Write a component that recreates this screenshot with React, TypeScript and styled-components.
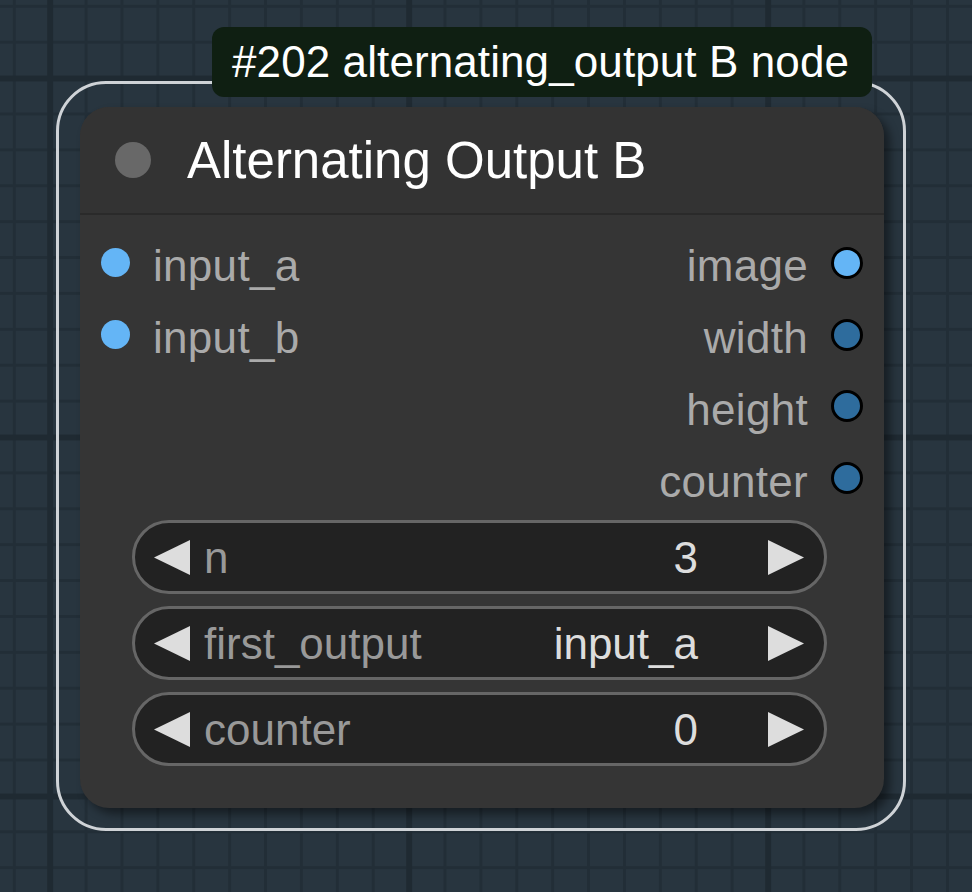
import React from "react";
import styled, { createGlobalStyle } from "styled-components";

const GlobalStyle = createGlobalStyle`
  html, body {
    margin: 0;
    padding: 0;
    width: 100%;
    height: 100%;
    overflow: hidden;
    background: #28353f;
  }
  body {
    font-family: "Liberation Sans", Arial, sans-serif;
  }
  #root {
    width: 100%;
    height: 100%;
  }
`;

const Canvas = styled.div`
  position: relative;
  width: 972px;
  height: 892px;
  overflow: hidden;
  background-color: #28353f;
  background-image:
    linear-gradient(to right, #1f2a32 0 6px, transparent 6px),
    linear-gradient(to bottom, #1f2a32 0 6px, transparent 6px),
    linear-gradient(to right, #222e37 0 3px, transparent 3px),
    linear-gradient(to bottom, #222e37 0 3px, transparent 3px);
  background-size: 359px 100%, 100% 359px, 35.9px 100%, 100% 35.9px;
  background-position: 47.2px 0, 0 75.5px, 12.8px 0, 0 4.8px;
`;

const Selection = styled.div`
  position: absolute;
  left: 56px;
  top: 81px;
  width: 850px;
  height: 750px;
  box-sizing: border-box;
  border: 3px solid #cfd3d7;
  border-radius: 50px;
  padding: 23px 20px 20px 21px;
`;

const Badge = styled.div`
  position: absolute;
  left: 212px;
  top: 27px;
  width: 660px;
  height: 70px;
  box-sizing: border-box;
  padding-left: 20px;
  display: flex;
  align-items: center;
  background: #0f1f12;
  border-radius: 12px;
  color: #ffffff;
  font-size: 44px;
  letter-spacing: 0.1px;
  white-space: nowrap;
`;

const Node = styled.div`
  width: 804px;
  height: 701px;
  box-sizing: border-box;
  background: #353535;
  border-radius: 29px;
  box-shadow: 6px 6px 10px rgba(0, 0, 0, 0.45);
  display: flex;
  flex-direction: column;
`;

const TitleBar = styled.div`
  height: 108px;
  box-sizing: border-box;
  flex: none;
  display: flex;
  align-items: center;
  gap: 36px;
  padding-left: 35px;
  background: #333333;
  border-radius: 29px 29px 0 0;
  border-bottom: 2px solid #2a2a2a;
`;

const TitleDot = styled.div`
  width: 36px;
  height: 36px;
  border-radius: 50%;
  background: #686868;
  flex: none;
`;

const TitleText = styled.div`
  color: #ffffff;
  font-size: 51px;
  white-space: nowrap;
`;

const Body = styled.div`
  display: flex;
  flex-direction: column;
  padding-top: 12px;
`;

const SlotArea = styled.div`
  display: flex;
  justify-content: space-between;
`;

const SlotColumn = styled.div<{ $side: "in" | "out" }>`
  display: flex;
  flex-direction: column;
  align-items: ${(p) => (p.$side === "in" ? "flex-start" : "flex-end")};
  padding: ${(p) => (p.$side === "in" ? "0 0 0 21px" : "0 21px 0 0")};
`;

const SlotRow = styled.div`
  height: 71.8px;
  display: flex;
  align-items: center;
  gap: 23px;
`;

const SlotLabel = styled.span`
  color: #aaaaaa;
  font-size: 44px;
  letter-spacing: 0.3px;
  white-space: nowrap;
  padding-top: 7px;
`;

const InputDot = styled.div`
  width: 29px;
  height: 29px;
  border-radius: 50%;
  background: #64b5f6;
  flex: none;
`;

const OutputDot = styled.div<{ $color: string }>`
  width: 32px;
  height: 32px;
  box-sizing: border-box;
  border-radius: 50%;
  border: 3px solid #000000;
  background: ${(p) => p.$color};
  flex: none;
`;

const WidgetList = styled.div`
  display: flex;
  flex-direction: column;
  gap: 12px;
  margin-top: 6px;
  margin-left: 52px;
  width: 695px;
`;

const Widget = styled.div`
  height: 74px;
  box-sizing: border-box;
  border: 3px solid #666666;
  border-radius: 37px;
  background: #222222;
  display: flex;
  align-items: center;
  padding: 0 20px 0 19px;
`;

const Arrow = styled.svg`
  width: 36px;
  height: 35px;
  flex: none;
  display: block;
`;

const WidgetLabel = styled.span`
  margin-left: 14px;
  color: #999999;
  font-size: 44px;
  white-space: nowrap;
  flex: 1;
  padding-top: 2px;
`;

const WidgetValue = styled.span`
  margin-right: 70px;
  color: #dddddd;
  font-size: 44px;
  white-space: nowrap;
  padding-top: 2px;
`;

const LeftArrow = () => (
  <Arrow viewBox="0 0 36 35">
    <polygon points="36,0 36,35 0,17.5" fill="#dddddd" />
  </Arrow>
);

const RightArrow = () => (
  <Arrow viewBox="0 0 36 35">
    <polygon points="0,0 0,35 36,17.5" fill="#dddddd" />
  </Arrow>
);

const inputs = ["input_a", "input_b"];
const outputs = [
  { name: "image", color: "#64b5f6" },
  { name: "width", color: "#2e6c9d" },
  { name: "height", color: "#2e6c9d" },
  { name: "counter", color: "#2e6c9d" },
];
const widgets = [
  { label: "n", value: "3" },
  { label: "first_output", value: "input_a" },
  { label: "counter", value: "0" },
];

export default function App() {
  return (
    <>
      <GlobalStyle />
      <Canvas>
        <Selection>
          <Node>
            <TitleBar>
              <TitleDot />
              <TitleText>Alternating Output B</TitleText>
            </TitleBar>
            <Body>
              <SlotArea>
                <SlotColumn $side="in">
                  {inputs.map((name) => (
                    <SlotRow key={name}>
                      <InputDot />
                      <SlotLabel>{name}</SlotLabel>
                    </SlotRow>
                  ))}
                </SlotColumn>
                <SlotColumn $side="out">
                  {outputs.map((o) => (
                    <SlotRow key={o.name}>
                      <SlotLabel>{o.name}</SlotLabel>
                      <OutputDot $color={o.color} />
                    </SlotRow>
                  ))}
                </SlotColumn>
              </SlotArea>
              <WidgetList>
                {widgets.map((w) => (
                  <Widget key={w.label}>
                    <LeftArrow />
                    <WidgetLabel>{w.label}</WidgetLabel>
                    <WidgetValue>{w.value}</WidgetValue>
                    <RightArrow />
                  </Widget>
                ))}
              </WidgetList>
            </Body>
          </Node>
        </Selection>
        <Badge>#202 alternating_output B node</Badge>
      </Canvas>
    </>
  );
}
